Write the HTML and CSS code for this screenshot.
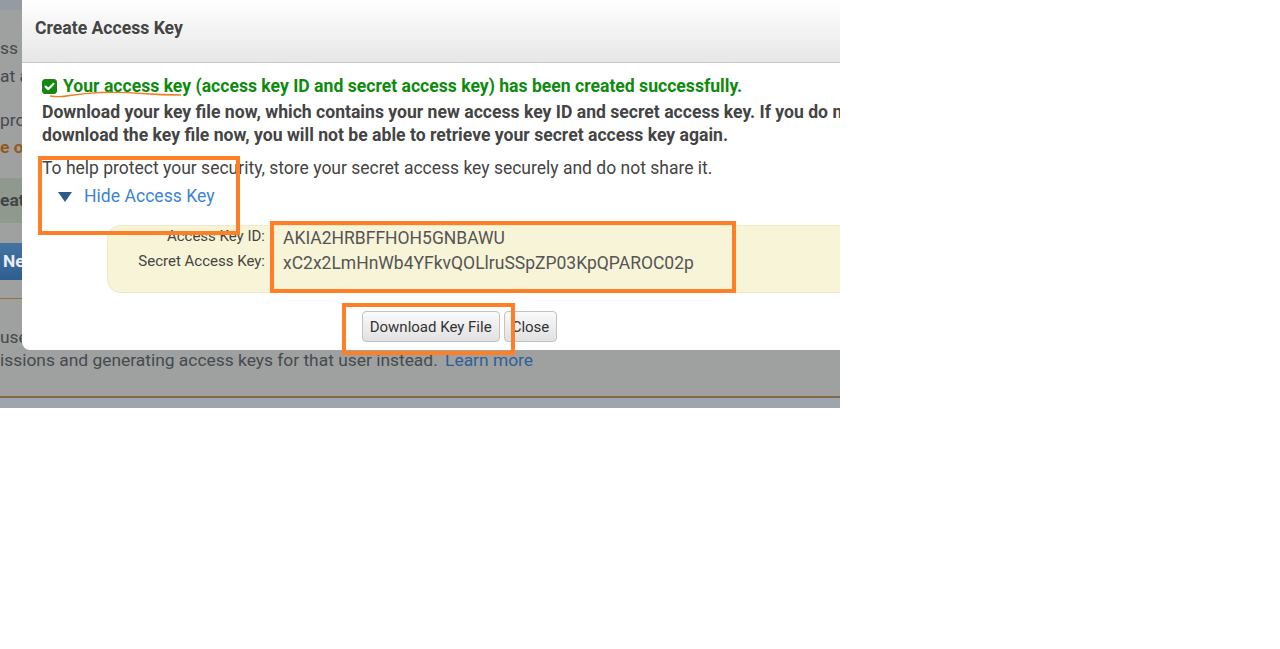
FILE: index.html
```html
<!DOCTYPE html>
<html lang="en">
<head>
<meta charset="utf-8">
<title>Create Access Key</title>
<link rel="stylesheet" href="styles.css">
</head>
<body>
<div class="shot">
  <div class="page">
    <div class="page-top"></div>
    <div class="bg-line l1">ss</div>
    <div class="bg-line l2">at a</div>
    <div class="bg-line l3">prov</div>
    <div class="bg-line l4">e o</div>
    <div class="bg-band">eat</div>
    <div class="bg-btn">Ne</div>
    <div class="bg-rule"></div>
    <div class="bg-para">
      <div>use</div>
      <div>issions and generating access keys for that user instead. <a class="bg-link">Learn more</a></div>
    </div>
    <div class="bg-rule2"></div>
    <div class="bg-foot"></div>
  </div>

  <div class="modal">
    <div class="modal-head">Create Access Key</div>
    <div class="modal-body">
      <div class="success">
        <svg class="check" width="15" height="15" viewBox="0 0 15 15"><rect x="0.5" y="0.5" width="14" height="14" rx="2.5" fill="#118a11" stroke="#2f7a10"/><path d="M3.6 7.6 L6.3 10.1 L11.4 4.9" fill="none" stroke="#fff" stroke-width="2.2" stroke-linecap="round" stroke-linejoin="round"/></svg>
        <span>Your access key (access key ID and secret access key) has been created successfully.</span>
      </div>
      <p class="warn">Download your key file now, which contains your new access key ID and secret access key. If you do not download the key file now, you will not be able to retrieve your secret access key again.</p>
      <p class="note">To help protect your security, store your secret access key securely and do not share it.</p>
      <div class="toggle"><span class="tri"></span><a class="toggle-link">Hide Access Key</a></div>
      <div class="keys">
        <div class="key-label">Access Key ID:</div>
        <div class="key-value">AKIA2HRBFFHOH5GNBAWU</div>
        <div class="key-label">Secret Access Key:</div>
        <div class="key-value">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</div>
      </div>
      <div class="actions">
        <button class="btn">Download Key File</button>
        <button class="btn">Close</button>
      </div>
    </div>
  </div>

  <svg class="squiggle" width="140" height="12" viewBox="0 0 140 12"><path d="M0 7 C6 8 12 8 20 6.5 C30 5 40 4 50 3.5 C65 3 80 3.5 92 4.5 C105 5.5 118 6 131 6" fill="none" stroke="#f07d22" stroke-width="1.3"/></svg>
  <div class="mark mark-toggle"></div>
  <div class="mark mark-keys"></div>
  <div class="mark mark-btn"></div>
</div>
</body>
</html>
```

FILE: styles.css
```css
* { box-sizing: border-box; }
body { margin: 0; background: #ffffff; font-family: Roboto, "Liberation Sans", Arial, sans-serif; }

.shot { position: relative; width: 840px; height: 408px; overflow: hidden; background: #9ea1a0; }

/* dimmed page underneath */
.page { display: flex; flex-direction: column; width: 840px; color: #464a4f; font-size: 17.4px; }
.page-top { height: 10px; background: #959ba2; }
.bg-line { height: 24px; line-height: 24px; white-space: nowrap; }
.l1 { margin-top: 26px; }
.l2 { margin-top: 4px; }
.l3 { margin-top: 20px; }
.l4 { margin-top: 3px; font-weight: 700; color: #935a1f; }
.bg-band { margin-top: 19px; height: 45px; line-height: 45px; background: #8f998d; font-weight: 700; color: #3f4448; }
.bg-btn { margin-top: 20px; height: 37px; line-height: 37px; background: linear-gradient(#4473a2, #2f5f8f); color: #e9edf2; font-weight: 700; padding-left: 3px; }
.bg-rule { margin-top: 18px; height: 1px; background: #97703f; }
.bg-para { margin-top: 27px; line-height: 23px; white-space: nowrap; }
.bg-link { color: #2e5f98; margin-left: 3px; }
.bg-rule2 { margin-top: 24px; height: 2px; background: #7f6a45; }
.bg-foot { height: 20px; background: #9ea5ad; }

/* modal */
.modal { position: absolute; left: 22px; top: 0; width: 875px; background: #ffffff; border-radius: 0 0 8px 8px; }
.modal-head { height: 63px; padding: 17px 13px 0; line-height: 22px; font-size: 17.6px; font-weight: 700; color: #444444; background: linear-gradient(#ffffff, #e6e6e6); border-bottom: 1px solid #c8c8c8; }
.modal-body { padding: 12px 20px 8px; font-size: 17.6px; color: #444444; }

.success { display: flex; align-items: center; gap: 6px; line-height: 23px; font-weight: 700; color: #0e8a0e; white-space: nowrap; }
.check { flex: none; }
.warn { margin: 3px 0 0; line-height: 23px; font-weight: 700; color: #444444; }
.note { margin: 10px 0 0; line-height: 23px; font-size: 17.5px; color: #444444; }

.toggle { margin-top: 5px; padding-left: 16px; display: flex; align-items: center; gap: 12px; line-height: 23px; }
.tri { width: 0; height: 0; border-left: 7px solid transparent; border-right: 7px solid transparent; border-top: 10px solid #2c5b8b; }
.toggle-link { color: #3b84d4; }

.keys { margin: 17px 0 0 65px; height: 68px; background: #f8f4d8; border: 1px solid #efe9c6; border-right: none; border-radius: 14px 0 0 14px; display: grid; grid-template-columns: 157px auto; column-gap: 18px; grid-auto-rows: 25px; align-content: start; }
.key-label { text-align: right; font-size: 15px; line-height: 21px; color: #444444; }
.key-value { font-size: 17.5px; line-height: 25px; color: #555555; }

.actions { margin-top: 18px; display: flex; justify-content: center; gap: 4px; }
.btn { height: 31px; padding: 0 7px; font-family: Roboto, "Liberation Sans", Arial, sans-serif; font-size: 15px; color: #333333; background: linear-gradient(#fafafa, #e1e1e1); border: 1px solid #c2c2c2; border-radius: 4px; }

/* annotations drawn over the screenshot */
.mark { position: absolute; border: 4px solid #ff7f27; }
.mark-toggle { left: 38px; top: 156px; width: 202px; height: 79px; }
.mark-keys { left: 270px; top: 221px; width: 466px; height: 72px; }
.mark-btn { left: 342px; top: 303px; width: 173px; height: 52px; }
.squiggle { position: absolute; left: 50px; top: 89px; }
```
